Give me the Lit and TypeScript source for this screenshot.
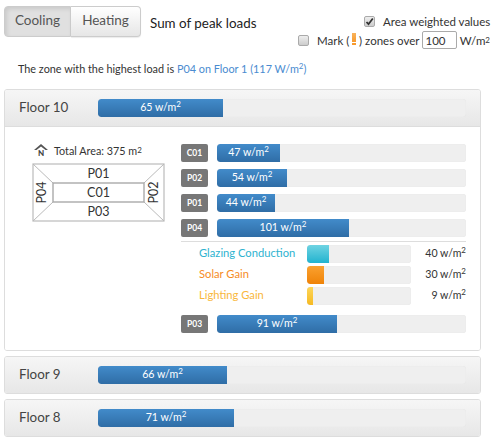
import { LitElement, html, css, svg } from "lit";
import { customElement } from "lit/decorators.js";

const unit = (label = "w/m") => html`${label}<sup>2</sup>`;

@customElement("app-root")
export class AppRoot extends LitElement {
  static styles = css`
    :host { display: block; width: 497px; height: 439px; overflow: hidden; background: #fff; color: #333;
      font-family: Lato, "Open Sans", sans-serif; font-size: 11px; box-sizing: border-box; padding: 6px 0 0 4px; }
    * { box-sizing: border-box; }
    sup { font-size: 8px; line-height: 0; vertical-align: 4px; }
    .top { display: flex; height: 43px; }
    .btns { display: flex; height: 31px; width: 137px; flex: none; }
    .btn { display: flex; align-items: center; justify-content: center; font-size: 13.5px; color: #555; padding-bottom: 3px;
      border: 1px solid #ccc; box-shadow: 0 1px 1px rgba(0,0,0,.08); }
    .btn.on { width: 67px; background: #e0e0e0; border-radius: 4px 0 0 4px; box-shadow: inset 2px 2px 4px rgba(0,0,0,.1); }
    .btn.off { width: 70px; border-left: 0; background: linear-gradient(#fff, #e6e6e6); border-radius: 0 4px 4px 0; }
    .sum { font-size: 13.4px; color: #222; margin: 9px 0 0 9px; line-height: 17px; }
    .opts { margin-left: auto; width: 202px; margin-right: 7px; color: #333; font-size: 11.5px; padding-top: 8px; }
    .o1 { display: flex; align-items: center; height: 15px; padding-left: 76px; white-space: nowrap; }
    .o2 { display: flex; align-items: center; height: 18px; margin-top: 2px; padding-left: 10px; white-space: nowrap; }
    .cb { width: 11px; height: 11px; flex: none; border: 1px solid #aaa; border-radius: 2px; background: linear-gradient(#eee, #ccc);
      display: flex; align-items: center; justify-content: center; margin-right: 8px; }
    .bang { display: inline-block; width: 4px; height: 12px; margin: 0 3px 2px;
      background: linear-gradient(#f9b35c 0, #f79a2e 9px, transparent 9px, transparent 10px, #f79a2e 10px); }
    .inp { width: 36px; height: 18px; border: 1px solid #aaa; border-radius: 2px; margin: 0 3px; padding: 1px 2px; line-height: 15px; font-size: 11.5px; color: #333; }
    .hl { height: 40px; padding: 12px 0 0 14px; font-size: 10.85px; line-height: 16px; color: #333; white-space: nowrap; }
    .hl span { color: #4a8bd0; }
    .panel { width: 477px; border: 1px solid #ddd; border-radius: 3px; margin-bottom: 5px; overflow: hidden; }
    .head { display: flex; align-items: center; height: 36px; background: linear-gradient(#f6f6f6, #e7e7e7); padding-left: 14px; }
    .head .name { width: 79px; font-size: 13.4px; color: #444; padding-bottom: 3px; }
    .track { display: block; background: #efefef; border-radius: 3px; height: 18px; box-shadow: inset 0 0 1px #ddd; overflow: hidden; }
    .fill { display: flex; align-items: center; justify-content: center; height: 100%; color: #fff; font-size: 10.6px; line-height: 16px; padding-bottom: 2px; white-space: nowrap;
      background: linear-gradient(#428bca, #2f6da6); border-radius: 3px 0 0 3px; }
    .head .track { width: 368px; }
    .body { display: flex; height: 224px; border-top: 1px solid #ddd; background: #fff; padding: 17px 0 0 27px; }
    .left { width: 149px; flex: none; }
    .ta { display: flex; align-items: center; height: 18px; font-size: 10.8px; color: #333; margin: -3px 0 0 2px; white-space: nowrap; }
    .ta svg { margin-right: 6px; }
    .plan { display: block; margin-top: 4px; font-family: Lato, sans-serif; }
    .right { width: 285px; flex: none; }
    .row { display: flex; height: 18px; margin-bottom: 7px; }
    .tag { width: 27px; height: 18px; background: #777; color: #fff; border-radius: 2px; font-size: 8.5px; font-weight: 700; display: flex; align-items: center; justify-content: center; margin-right: 9px; }
    .row .track { width: 249px; }
    .divide { border-top: 1px solid #ddd; margin: -3px 0 3px; }
    .sub { display: flex; height: 18px; margin-bottom: 3px; align-items: center; }
    .sub .lbl { width: 126px; padding-left: 18px; font-size: 11.2px; white-space: nowrap; padding-bottom: 3px; }
    .sub .track { width: 104px; }
    .sub .val { margin-left: auto; font-size: 10.6px; color: #333; white-space: nowrap; padding-bottom: 2px; }
    .sub .fill { border-radius: 3px 0 0 3px; }
    .teal .lbl { color: #2eb3d0; } .teal .fill { background: linear-gradient(#6fd3e2, #22b3cf); }
    .orange .lbl { color: #f68c1f; } .orange .fill { background: linear-gradient(#fba12f, #ef8308); }
    .yellow .lbl { color: #f9b73c; } .yellow .fill { background: linear-gradient(#fdd65a, #f6b921); }
    .gap { height: 7px; }
  `;

  bar(w: number, text: string) {
    return html`<span class="track"><span class="fill" style="width:${w}px"><span>${text} ${unit()}</span></span></span>`;
  }
  zone(tag: string, w: number, text: string) {
    return html`<div class="row"><div class="tag">${tag}</div>${this.bar(w, text)}</div>`;
  }
  sub(cls: string, name: string, w: number, val: string) {
    return html`<div class="sub ${cls}"><div class="lbl">${name}</div><span class="track"><span class="fill" style="width:${w}px"></span></span><div class="val">${val} ${unit()}</div></div>`;
  }
  floor(name: string, w: number, text: string) {
    return html`<div class="head"><div class="name">${name}</div>${this.bar(w, text)}</div>`;
  }

  render() {
    const t = "font-size:12.5px;fill:#333";
    return html`
      <div class="top">
        <div class="btns"><div class="btn on">Cooling</div><div class="btn off">Heating</div></div>
        <div class="sum">Sum of peak loads</div>
        <div class="opts">
          <div class="o1"><span class="cb"><svg width="9" height="9" viewBox="0 0 9 9"><path d="M1.5 5 L3.5 7.2 L7.8 1.5" fill="none" stroke="#333" stroke-width="1.8"/></svg></span>Area weighted values</div>
          <div class="o2"><span class="cb"></span>Mark (<span class="bang"></span>) zones over<span class="inp">100</span>W/m<sup>2</sup></div>
        </div>
      </div>
      <div class="hl">The zone with the highest load is <span>P04 on Floor 1 (117 W/m<sup>2</sup>)</span></div>
      <div class="panel">
        ${this.floor("Floor 10", 125, "65")}
        <div class="body">
          <div class="left">
            <div class="ta">
              <svg width="14" height="13" viewBox="0 0 14 13"><path d="M0 6 L7 0 L14 6 L11.5 6 L7 2.6 L2.5 6 Z" fill="#555"/><text x="7" y="12" text-anchor="middle" style="font-size:8px;font-weight:900;fill:#444">N</text></svg>
              Total Area: 375 m<sup>2</sup>
            </div>
            <svg class="plan" width="134" height="60" viewBox="0 0 134 60">
              ${svg`
              <g fill="none" stroke="#bbb">
                <rect x="1" y="1" width="131" height="57" stroke-width="1.2"/>
                <path d="M1 1 L21 20 M132 1 L112 20 M1 58 L21 39 M132 58 L112 39" stroke-width="1"/>
                <rect x="21" y="20" width="91" height="19" stroke="#aaa" stroke-width="1.4"/>
              </g>
              <text x="66.5" y="15" text-anchor="middle" style=${t}>P01</text>
              <text x="66.5" y="34" text-anchor="middle" style=${t}>C01</text>
              <text x="66.5" y="53" text-anchor="middle" style=${t}>P03</text>
              <text transform="translate(14 29.5) rotate(-90)" text-anchor="middle" style=${t}>P04</text>
              <text transform="translate(126 29.5) rotate(-90)" text-anchor="middle" style=${t}>P02</text>
              `}
            </svg>
          </div>
          <div class="right">
            ${this.zone("C01", 63, "47")}
            ${this.zone("P02", 70, "54")}
            ${this.zone("P01", 58, "44")}
            ${this.zone("P04", 132, "101")}
            <div class="divide"></div>
            ${this.sub("teal", "Glazing Conduction", 22, "40")}
            ${this.sub("orange", "Solar Gain", 17, "30")}
            ${this.sub("yellow", "Lighting Gain", 6, "9")}
            <div class="gap"></div>
            ${this.zone("P03", 120, "91")}
          </div>
        </div>
      </div>
      <div class="panel">${this.floor("Floor 9", 129, "66")}</div>
      <div class="panel">${this.floor("Floor 8", 136, "71")}</div>
    `;
  }
}
